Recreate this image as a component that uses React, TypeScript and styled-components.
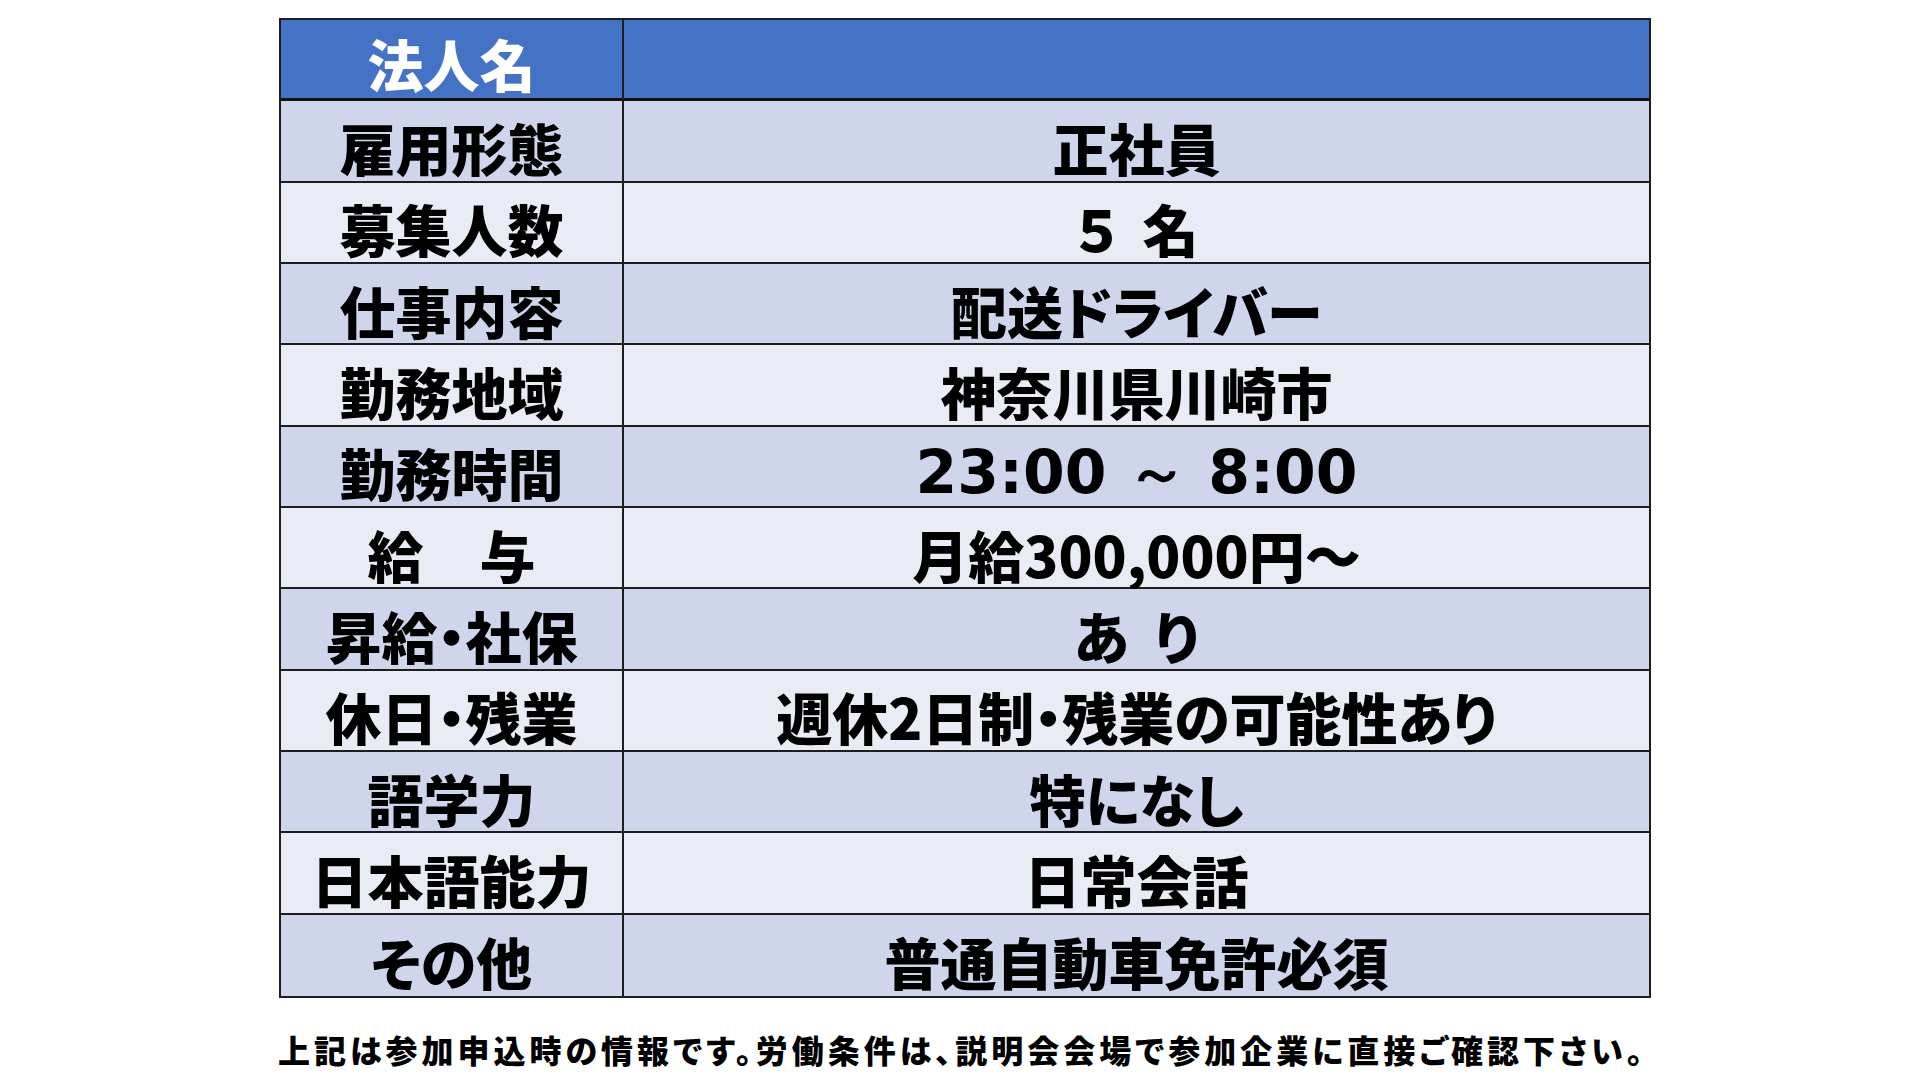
import React, { FC } from "react";
import styled, { createGlobalStyle } from "styled-components";

const GlobalStyle = createGlobalStyle`
  html, body {
    margin: 0;
    padding: 0;
    background: #ffffff;
  }
  body {
    font-family: "Noto Sans CJK JP", "Noto Sans", sans-serif;
  }
`;

interface Row {
  label: string;
  value: string;
  latin?: boolean;
}

const rows: Row[] = [
  { label: "雇用形態", value: "正社員" },
  { label: "募集人数", value: "５  名" },
  { label: "仕事内容", value: "配送ドライバー" },
  { label: "勤務地域", value: "神奈川県川崎市" },
  { label: "勤務時間", value: "23:00 ～ 8:00", latin: true },
  { label: "給　与", value: "月給300,000円～" },
  { label: "昇給・社保", value: "あ  り" },
  { label: "休日・残業", value: "週休2日制・残業の可能性あり" },
  { label: "語学力", value: "特になし" },
  { label: "日本語能力", value: "日常会話" },
  { label: "その他", value: "普通自動車免許必須" },
];

const App: FC = () => {
  return (
    <>
      <GlobalStyle />
      <Page>
        <Table>
          <HeadCell>法人名</HeadCell>
          <HeadCell $last />
          {rows.map((row, i) => (
            <React.Fragment key={row.label}>
              <Cell $odd={i % 2 === 0} $bottom={i === rows.length - 1}>
                {row.label}
              </Cell>
              <Cell $odd={i % 2 === 0} $last $bottom={i === rows.length - 1}>
                {row.latin ? <LatinText>{row.value}</LatinText> : row.value}
              </Cell>
            </React.Fragment>
          ))}
        </Table>
        <Note>
          上記は参加申込時の情報です。労働条件は、説明会会場で参加企業に直接ご確認下さい。
        </Note>
      </Page>
    </>
  );
};

const Page = styled.div`
  width: 1372px;
  padding: 18px 0 0 279px;
`;

const Table = styled.div`
  display: grid;
  grid-template-columns: 343px 1fr;
  grid-template-rows: repeat(12, minmax(0, 1fr));
  height: 980px;
  border: 2px solid #1e1e1e;
  box-sizing: border-box;
`;

const HeadCell = styled.div<{ $last?: boolean }>`
  display: flex;
  align-items: center;
  justify-content: center;
  padding-top: 8px;
  background: #4472c4;
  color: #ffffff;
  font-size: 56px;
  font-weight: 900;
  line-height: 1;
  font-feature-settings: "palt";
  border-right: ${(p) => (p.$last ? "none" : "2px solid #1e1e1e")};
  border-bottom: 3px solid #111111;
`;

const Cell = styled.div<{ $odd: boolean; $last?: boolean; $bottom?: boolean }>`
  display: flex;
  align-items: center;
  justify-content: center;
  padding-top: 12px;
  background: ${(p) => (p.$odd ? "#cfd5ea" : "#e9ebf5")};
  color: #000000;
  font-size: 56px;
  font-weight: 900;
  line-height: 1;
  white-space: pre;
  font-feature-settings: "palt";
  border-right: ${(p) => (p.$last ? "none" : "2px solid #1e1e1e")};
  border-bottom: ${(p) => (p.$bottom ? "none" : "2px solid #1e1e1e")};
`;

const LatinText = styled.span`
  font-family: "DejaVu Sans", "Liberation Sans", sans-serif;
  font-weight: 700;
  font-size: 60px;
  font-feature-settings: normal;
`;

const Note = styled.div`
  margin-top: 28px;
  margin-left: -1px;
  font-size: 32px;
  font-weight: 900;
  letter-spacing: 4px;
  font-feature-settings: "palt";
  color: #000000;
  white-space: nowrap;
`;

export default App;
